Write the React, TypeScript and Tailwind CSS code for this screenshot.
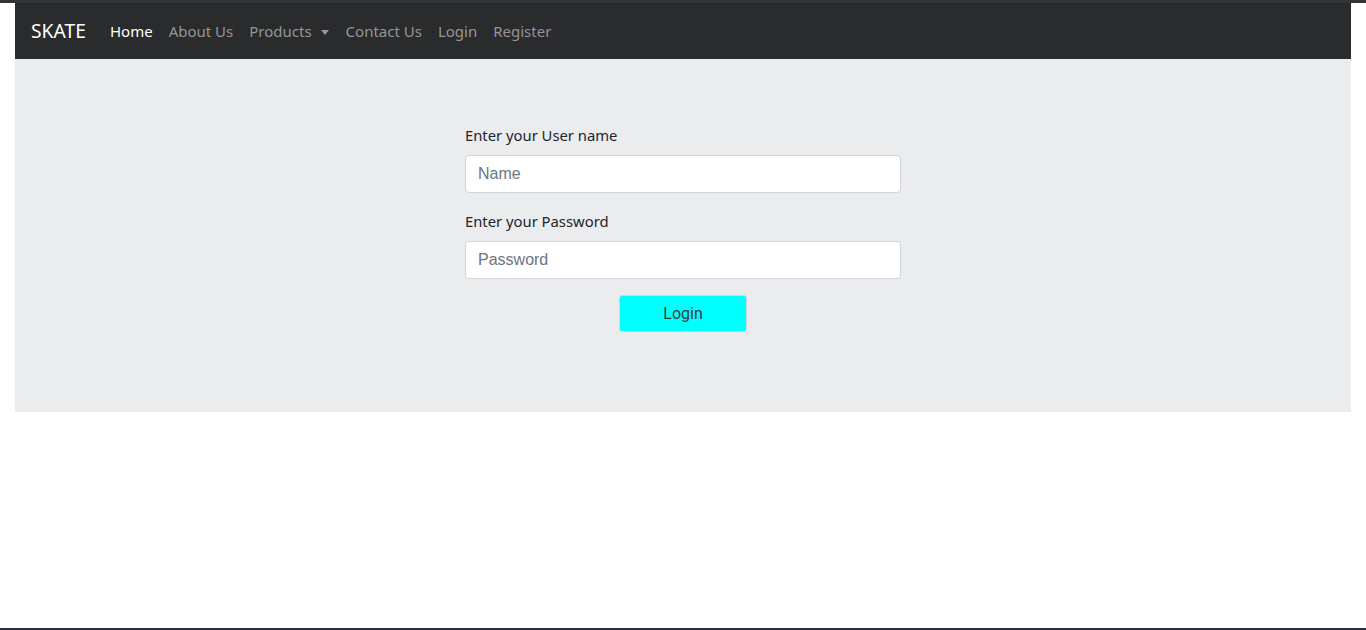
import { useState } from "react";

const navLinks = ["About Us", "Products", "Contact Us", "Login", "Register"];

function Navbar() {
  return (
    <nav className="flex h-14 items-center bg-[#2a2b2d] px-4 font-['Noto_Sans',sans-serif]">
      <span className="mr-4 text-[19.3px] leading-none text-white">SKATE</span>
      <ul className="flex items-center text-[15px]">
        <li className="px-2 text-white">Home</li>
        {navLinks.map((label) => (
          <li key={label} className="flex items-center px-2 text-[#959697]">
            {label}
            {label === "Products" && (
              <span className="ml-[9px] mr-[1px] mt-[2px] h-0 w-0 border-x-[4.5px] border-t-[5px] border-x-transparent border-t-[#959697]" />
            )}
          </li>
        ))}
      </ul>
    </nav>
  );
}

function LoginForm() {
  const [name, setName] = useState("");
  const [password, setPassword] = useState("");

  return (
    <form className="mx-auto flex w-[436px] flex-col" onSubmit={(e) => e.preventDefault()}>
      <div className="mb-4 flex flex-col">
        <label className="mb-2 text-[14.8px] leading-6 text-[#212529] font-['Noto_Sans',sans-serif]">
          Enter your User name
        </label>
        <input
          value={name}
          onChange={(e) => setName(e.target.value)}
          placeholder="Name"
          className="h-[38px] rounded border border-[#ced4da] bg-white px-3 text-[16px] text-[#495057] font-['Liberation_Sans',Arial,sans-serif] placeholder:text-[#6c757d] outline-none"
        />
      </div>
      <div className="mb-4 flex flex-col">
        <label className="mb-2 text-[14.8px] leading-6 text-[#212529] font-['Noto_Sans',sans-serif]">
          Enter your Password
        </label>
        <input
          type="password"
          value={password}
          onChange={(e) => setPassword(e.target.value)}
          placeholder="Password"
          className="h-[38px] rounded border border-[#ced4da] bg-white px-3 text-[16px] text-[#495057] font-['Liberation_Sans',Arial,sans-serif] placeholder:text-[#6c757d] outline-none"
        />
      </div>
      <div className="mb-4 flex justify-center">
        <button
          type="submit"
          className="h-[37px] w-[128px] rounded-[3px] border border-[#d5d5d5] bg-[#00ffff] text-[16px] text-[#3a3a3a] font-['Roboto',Arial,sans-serif]"
        >
          Login
        </button>
      </div>
    </form>
  );
}

export default function App() {
  return (
    <div className="flex h-[630px] flex-col bg-white">
      <div className="h-[3px] bg-[#333435]" />
      <div className="flex-1 px-[15px]">
        <Navbar />
        <section className="bg-[#ebecee] px-8 py-16">
          <LoginForm />
        </section>
      </div>
      <div className="h-[2px] bg-[#27303b]" />
    </div>
  );
}
